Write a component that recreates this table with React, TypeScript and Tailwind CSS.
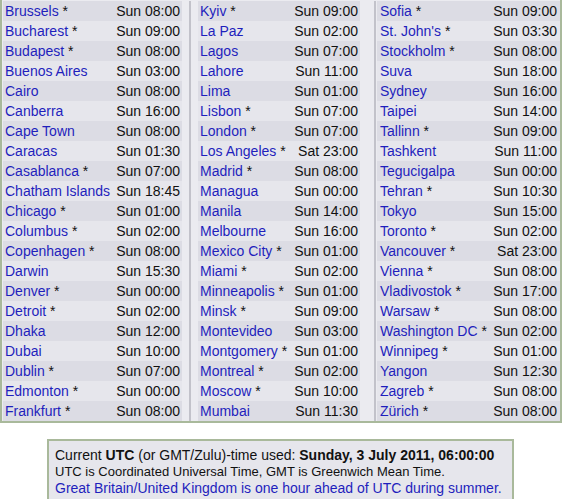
const col1: [string, boolean, string][] = [
  ["Brussels", true, "Sun 08:00"],
  ["Bucharest", true, "Sun 09:00"],
  ["Budapest", true, "Sun 08:00"],
  ["Buenos Aires", false, "Sun 03:00"],
  ["Cairo", false, "Sun 08:00"],
  ["Canberra", false, "Sun 16:00"],
  ["Cape Town", false, "Sun 08:00"],
  ["Caracas", false, "Sun 01:30"],
  ["Casablanca", true, "Sun 07:00"],
  ["Chatham Islands", false, "Sun 18:45"],
  ["Chicago", true, "Sun 01:00"],
  ["Columbus", true, "Sun 02:00"],
  ["Copenhagen", true, "Sun 08:00"],
  ["Darwin", false, "Sun 15:30"],
  ["Denver", true, "Sun 00:00"],
  ["Detroit", true, "Sun 02:00"],
  ["Dhaka", false, "Sun 12:00"],
  ["Dubai", false, "Sun 10:00"],
  ["Dublin", true, "Sun 07:00"],
  ["Edmonton", true, "Sun 00:00"],
  ["Frankfurt", true, "Sun 08:00"],
];

const col2: [string, boolean, string][] = [
  ["Kyiv", true, "Sun 09:00"],
  ["La Paz", false, "Sun 02:00"],
  ["Lagos", false, "Sun 07:00"],
  ["Lahore", false, "Sun 11:00"],
  ["Lima", false, "Sun 01:00"],
  ["Lisbon", true, "Sun 07:00"],
  ["London", true, "Sun 07:00"],
  ["Los Angeles", true, "Sat 23:00"],
  ["Madrid", true, "Sun 08:00"],
  ["Managua", false, "Sun 00:00"],
  ["Manila", false, "Sun 14:00"],
  ["Melbourne", false, "Sun 16:00"],
  ["Mexico City", true, "Sun 01:00"],
  ["Miami", true, "Sun 02:00"],
  ["Minneapolis", true, "Sun 01:00"],
  ["Minsk", true, "Sun 09:00"],
  ["Montevideo", false, "Sun 03:00"],
  ["Montgomery", true, "Sun 01:00"],
  ["Montreal", true, "Sun 02:00"],
  ["Moscow", true, "Sun 10:00"],
  ["Mumbai", false, "Sun 11:30"],
];

const col3: [string, boolean, string][] = [
  ["Sofia", true, "Sun 09:00"],
  ["St. John's", true, "Sun 03:30"],
  ["Stockholm", true, "Sun 08:00"],
  ["Suva", false, "Sun 18:00"],
  ["Sydney", false, "Sun 16:00"],
  ["Taipei", false, "Sun 14:00"],
  ["Tallinn", true, "Sun 09:00"],
  ["Tashkent", false, "Sun 11:00"],
  ["Tegucigalpa", false, "Sun 00:00"],
  ["Tehran", true, "Sun 10:30"],
  ["Tokyo", false, "Sun 15:00"],
  ["Toronto", true, "Sun 02:00"],
  ["Vancouver", true, "Sat 23:00"],
  ["Vienna", true, "Sun 08:00"],
  ["Vladivostok", true, "Sun 17:00"],
  ["Warsaw", true, "Sun 08:00"],
  ["Washington DC", true, "Sun 02:00"],
  ["Winnipeg", true, "Sun 01:00"],
  ["Yangon", false, "Sun 12:30"],
  ["Zagreb", true, "Sun 08:00"],
  ["Zürich", true, "Sun 08:00"],
];

function CityList({ rows, pad }: { rows: [string, boolean, string][]; pad: string }) {
  return (
    <div>
      {rows.map(([city, dst, time], i) => (
        <div
          key={city}
          className={`h-[20px] flex items-center justify-between whitespace-nowrap ${pad} ${
            i % 2 === 0 ? "bg-[#dcdce4]" : "bg-[#e6e6ec]"
          }`}
        >
          <span>
            <span className="text-[#1f1fbd]">{city}</span>
            {dst && <span className="text-[#111]"> *</span>}
          </span>
          <span className="text-[#111]">{time}</span>
        </div>
      ))}
    </div>
  );
}

export default function App() {
  return (
    <div className="w-[563px] h-[499px] overflow-hidden bg-white font-['Liberation_Sans',Arial,sans-serif] text-[14px] leading-none">
      <div className="flex w-[562px] pt-px border-x-2 border-b-2 border-[#a9b99b] bg-[#ebebf0]">
        <div className="w-[187px] pl-px pr-[7px]">
          <CityList rows={col1} pad="pl-[2px] pr-[2px]" />
        </div>
        <div className="w-[2px] bg-[#c2c2ca]" />
        <div className="w-[183px] pl-[7px] pr-[14px]">
          <CityList rows={col2} pad="pl-[2px] pr-[2px]" />
        </div>
        <div className="w-[2px] bg-[#c2c2ca]" />
        <div className="w-[184px] pl-px">
          <CityList rows={col3} pad="pl-[3px] pr-[3px]" />
        </div>
      </div>
      <div className="ml-[47px] mt-[16px] w-[467px] border-2 border-[#a9b99b] bg-[#e6e6ec] px-[6px] pt-[6px] pb-[8px] text-[14px] leading-[16.5px] text-[#111] whitespace-nowrap">
        <div>
          Current <b>UTC</b> (or GMT/Zulu)-time used: <b>Sunday, 3 July 2011, 06:00:00</b>
        </div>
        <div className="text-[13px]">UTC is Coordinated Universal Time, GMT is Greenwich Mean Time.</div>
        <div className="text-[#1f1fbd]">Great Britain/United Kingdom is one hour ahead of UTC during summer.</div>
      </div>
    </div>
  );
}
